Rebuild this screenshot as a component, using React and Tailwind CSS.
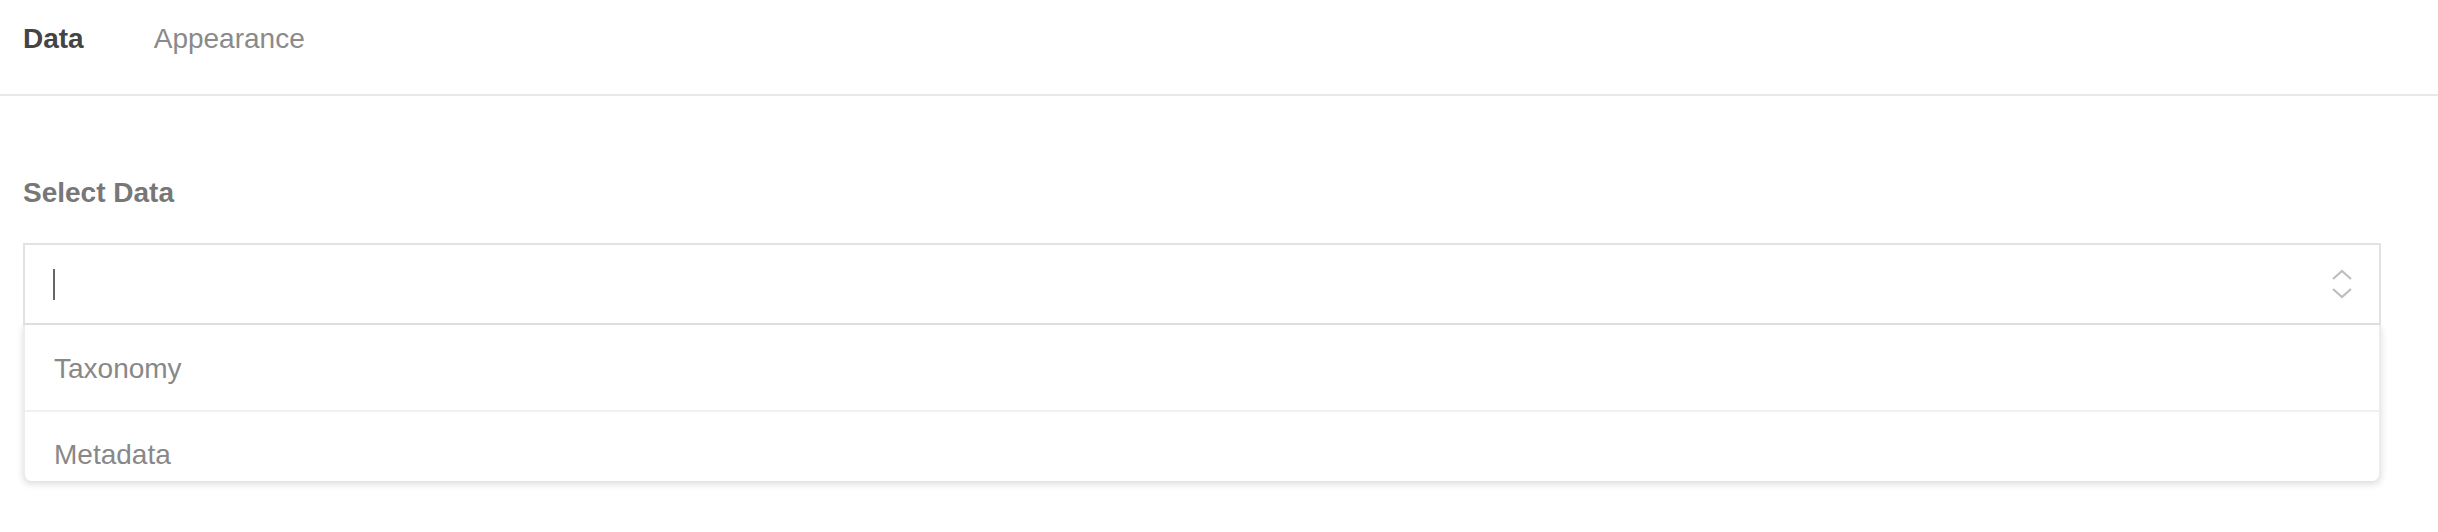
import React from "react";

const options = ["Taxonomy", "Metadata"];

export default function App() {
  return (
    <div className="w-[2438px] h-[532px] bg-white font-['Liberation_Sans',Arial,sans-serif] overflow-hidden">
      <div className="h-[96px] border-b-2 border-[#e8e8e8] pl-[23px] pt-[23px] flex items-start gap-[70px] text-[28px] leading-[32px]">
        <span className="font-bold text-[#444444]">Data</span>
        <span className="text-[#8a8a8a]">Appearance</span>
      </div>
      <div className="pl-[23px] pr-[57px]">
        <div className="mt-[81px] text-[28px] leading-[32px] font-bold text-[#777777]">Select Data</div>
        <div className="mt-[34px] relative">
          <div className="h-[82px] border-2 border-[#e2e2e2] flex items-center pl-[28px] pr-[26px] justify-between">
            <div className="w-[2px] h-[31px] bg-[#666666]" />
            <svg width="22" height="30" viewBox="0 0 22 30" fill="none" stroke="#bdbdbd" strokeWidth="2.2">
              <polyline points="2,10 11,2 20,10" />
              <polyline points="2,20 11,28 20,20" />
            </svg>
          </div>
          <div className="absolute left-0 right-0 top-[82px] h-[156px] overflow-hidden bg-white border-x-2 border-[#ececec] rounded-b-[8px] shadow-[0_3px_7px_rgba(0,0,0,0.14)]">
            {options.map((opt, i) => (
              <div
                key={opt}
                className={i === 0 ? "h-[87px] border-b-2 border-[#f0f0f0] flex items-center pt-[2px] pl-[29px] text-[28px] text-[#888888]" : "h-[85px] flex items-center pl-[29px] text-[28px] text-[#888888]"}
              >
                {opt}
              </div>
            ))}
          </div>
        </div>
      </div>
    </div>
  );
}
